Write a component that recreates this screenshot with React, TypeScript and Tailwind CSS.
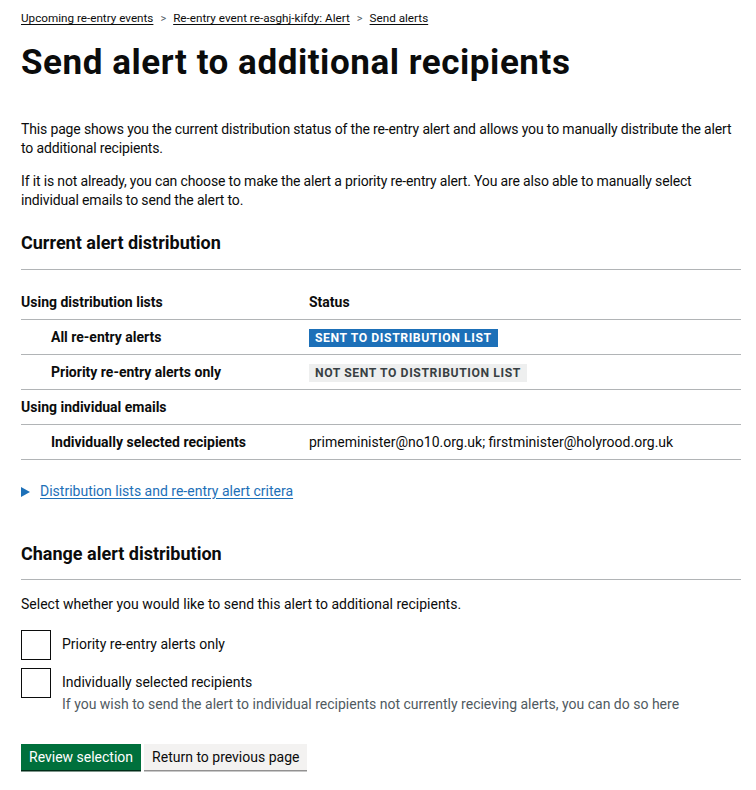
import React from 'react';

const Tag: React.FC<{ tone: 'blue' | 'grey'; children: React.ReactNode }> = ({ tone, children }) => (
  <span
    className={`inline-block px-[6px] pt-[2px] pb-[1px] text-[12.2px] leading-[15px] font-bold uppercase tracking-[0.6px] ${
      tone === 'blue' ? 'bg-[#1d70b8] text-white' : 'bg-[#eeefef] text-[#383f43]'
    }`}
  >
    {children}
  </span>
);

const rows = [
  { label: 'Using distribution lists', value: 'Status', head: true },
  { label: 'All re-entry alerts', value: <Tag tone="blue">Sent to distribution list</Tag>, sub: true },
  { label: 'Priority re-entry alerts only', value: <Tag tone="grey">Not sent to distribution list</Tag>, sub: true },
  { label: 'Using individual emails', value: '', head: true },
  {
    label: 'Individually selected recipients',
    value: 'primeminister@no10.org.uk; firstminister@holyrood.org.uk',
    sub: true,
  },
];

const Checkbox: React.FC<{ label: string; hint?: string }> = ({ label, hint }) => (
  <div className="flex gap-[11px]">
    <div className="w-[30px] h-[30px] shrink-0 border-[1.5px] border-[#0b0c0c] bg-white" />
    <div className="pt-[5px]">
      <div className="text-[14px] leading-[19px]">{label}</div>
      {hint && <div className="text-[14px] leading-[19px] text-[#505a5f] mt-[3px]">{hint}</div>}
    </div>
  </div>
);

export default function App() {
  return (
    <div className="min-h-[790px] bg-white text-[#0b0c0c] px-[21px] pt-[11px] pb-8 font-['Roboto',sans-serif]">
      {/* Breadcrumbs */}
      <nav className="flex items-center text-[11.7px] leading-[15px]">
        <a className="underline underline-offset-2">Upcoming re-entry events</a>
        <span className="mx-[7px] text-[#505a5f] text-[11px]">&gt;</span>
        <a className="underline underline-offset-2">Re-entry event re-asghj-kifdy: Alert</a>
        <span className="mx-[7px] text-[#505a5f] text-[11px]">&gt;</span>
        <a className="underline underline-offset-2">Send alerts</a>
      </nav>

      <h1 className="mt-[18px] text-[35px] leading-[37px] font-bold tracking-[0.55px]">
        Send alert to additional recipients
      </h1>

      <div className="mt-[39px] text-[14px] leading-[18.5px] tracking-[-0.15px]">
        <p>
          This page shows you the current distribution status of the re-entry alert and allows you to manually
          distribute the alert to additional recipients.
        </p>
        <p className="mt-[15px]">
          If it is not already, you can choose to make the alert a priority re-entry alert. You are also able to
          manually select individual emails to send the alert to.
        </p>
      </div>

      <h2 className="mt-[23px] text-[18px] leading-[22px] font-bold">Current alert distribution</h2>
      <hr className="mt-[15px] border-t border-[#b1b4b6] w-[720px]" />

      {/* Distribution table */}
      <table className="mt-[15px] w-[720px] text-[14px] leading-[19px] border-collapse">
        <tbody>
          {rows.map((r, i) => (
            <tr key={i} className="border-b border-[#b1b4b6]">
              <td className={`py-[7.5px] w-[288px] font-bold ${r.sub ? 'pl-[30px]' : ''}`}>{r.label}</td>
              <td className={`py-[7.5px] ${r.head ? 'font-bold' : ''}`}>{r.value}</td>
            </tr>
          ))}
        </tbody>
      </table>

      {/* Details */}
      <div className="mt-[22px] flex items-center text-[14px] leading-[19px] text-[#1d70b8]">
        <svg width="10" height="10" viewBox="0 0 10 10" className="mr-[9px]">
          <path d="M0 0 L9 5 L0 10 Z" fill="#1d70b8" />
        </svg>
        <a className="underline underline-offset-2">Distribution lists and re-entry alert critera</a>
      </div>

      <h2 className="mt-[42px] text-[18px] leading-[22px] font-bold">Change alert distribution</h2>
      <hr className="mt-[14px] border-t border-[#b1b4b6] w-[720px]" />

      <p className="mt-[15px] text-[14px] leading-[19px]">
        Select whether you would like to send this alert to additional recipients.
      </p>

      <div className="mt-[16px] flex flex-col gap-[8px]">
        <Checkbox label="Priority re-entry alerts only" />
        <Checkbox
          label="Individually selected recipients"
          hint="If you wish to send the alert to individual recipients not currently recieving alerts, you can do so here"
        />
      </div>

      <div className="mt-[30px] flex gap-[3px]">
        <button className="h-[26px] px-[8px] bg-[#00703c] text-white text-[14px] leading-[19px] shadow-[0_1.5px_0_#002d18]">
          Review selection
        </button>
        <button className="h-[26px] px-[8px] bg-[#f3f2f1] text-[#0b0c0c] text-[14px] leading-[19px] shadow-[0_1.5px_0_#929191]">
          Return to previous page
        </button>
      </div>
    </div>
  );
}
